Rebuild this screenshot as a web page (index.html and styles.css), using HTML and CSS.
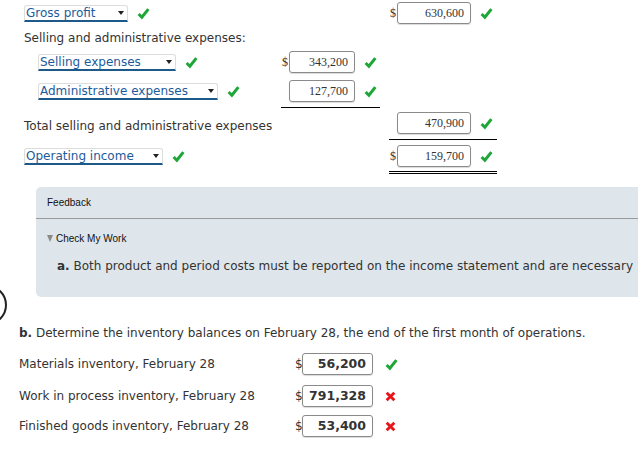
FILE: index.html
```html
<!DOCTYPE html>
<html lang="en">
<head>
    <meta charset="UTF-8">
    <title>Income statement</title>
    <link rel="stylesheet" href="styles.css">
</head>
<body>
    <div class="statement">
        <div class="row">
            <div class="label-cell">
                <span class="pick w-gross">Gross profit<i class="caret"></i></span>
                <svg class="ok" viewBox="0 0 12 12"><path d="M1.5 6.5 L4.5 9.5 L10.5 2"/></svg>
            </div>
            <div class="col1"></div>
            <div class="col2 amt">
                <span class="dollar">$</span><span class="num">630,600</span>
                <svg class="ok" viewBox="0 0 12 12"><path d="M1.5 6.5 L4.5 9.5 L10.5 2"/></svg>
            </div>
        </div>

        <div class="heading">Selling and administrative expenses:</div>

        <div class="row r-selling">
            <div class="label-cell sub">
                <span class="pick w-selling">Selling expenses<i class="caret"></i></span>
                <svg class="ok" viewBox="0 0 12 12"><path d="M1.5 6.5 L4.5 9.5 L10.5 2"/></svg>
            </div>
            <div class="col1 amt">
                <span class="dollar">$</span><span class="num">343,200</span>
                <svg class="ok" viewBox="0 0 12 12"><path d="M1.5 6.5 L4.5 9.5 L10.5 2"/></svg>
            </div>
        </div>

        <div class="row r-admin">
            <div class="label-cell sub">
                <span class="pick w-admin">Administrative expenses<i class="caret"></i></span>
                <svg class="ok" viewBox="0 0 12 12"><path d="M1.5 6.5 L4.5 9.5 L10.5 2"/></svg>
            </div>
            <div class="col1 amt single">
                <span class="dollar"></span><span class="num">127,700</span>
                <svg class="ok" viewBox="0 0 12 12"><path d="M1.5 6.5 L4.5 9.5 L10.5 2"/></svg>
            </div>
        </div>

        <div class="row r-total">
            <div class="label-cell text-label">Total selling and administrative expenses</div>
            <div class="col1"></div>
            <div class="col2 amt single">
                <span class="dollar"></span><span class="num">470,900</span>
                <svg class="ok" viewBox="0 0 12 12"><path d="M1.5 6.5 L4.5 9.5 L10.5 2"/></svg>
            </div>
        </div>

        <div class="row r-operating">
            <div class="label-cell">
                <span class="pick w-operating">Operating income<i class="caret"></i></span>
                <svg class="ok" viewBox="0 0 12 12"><path d="M1.5 6.5 L4.5 9.5 L10.5 2"/></svg>
            </div>
            <div class="col1"></div>
            <div class="col2 amt double">
                <span class="dollar">$</span><span class="num">159,700</span>
                <svg class="ok" viewBox="0 0 12 12"><path d="M1.5 6.5 L4.5 9.5 L10.5 2"/></svg>
            </div>
        </div>
    </div>

    <div class="feedback">
        <div class="feedback-title">Feedback</div>
        <div class="check-work"><i class="tri"></i>Check My Work</div>
        <p class="feedback-text"><b>a.</b> Both product and period costs must be reported on the income statement and are necessary</p>
    </div>

    <div class="part-b">
        <div class="step-circle"></div>
        <div class="part-heading"><b>b.</b> Determine the inventory balances on February 28, the end of the first month of operations.</div>

        <div class="inv-row inv-first">
            <div class="inv-label">Materials inventory, February 28</div>
            <span class="dollar">$</span><span class="inv-num">56,200</span>
            <svg class="ok" viewBox="0 0 12 12"><path d="M1.5 6.5 L4.5 9.5 L10.5 2"/></svg>
        </div>
        <div class="inv-row inv-second">
            <div class="inv-label">Work in process inventory, February 28</div>
            <span class="dollar">$</span><span class="inv-num">791,328</span>
            <svg class="bad" viewBox="0 0 10 10"><path d="M1.5 1.5 L8.5 8.5 M8.5 1.5 L1.5 8.5"/></svg>
        </div>
        <div class="inv-row inv-third">
            <div class="inv-label">Finished goods inventory, February 28</div>
            <span class="dollar">$</span><span class="inv-num">53,400</span>
            <svg class="bad" viewBox="0 0 10 10"><path d="M1.5 1.5 L8.5 8.5 M8.5 1.5 L1.5 8.5"/></svg>
        </div>
    </div>
</body>
</html>
```

FILE: styles.css
```css
* {
    margin: 0;
    padding: 0;
    box-sizing: border-box;
}

body {
    font-family: "DejaVu Sans", Verdana, sans-serif;
    font-size: 12px;
    color: #333;
    background: white;
    overflow: hidden;
}

/* income statement */

.statement {
    padding: 1px 0 0 24px;
}

.row {
    display: flex;
    align-items: flex-start;
}

.label-cell {
    width: 257px;
    height: 24px;
    display: flex;
    align-items: center;
    white-space: nowrap;
}

.label-cell.sub {
    padding-left: 14px;
}

.text-label {
    padding-top: 6px;
}

.col1,
.col2 {
    width: 108px;
}

.amt {
    display: flex;
    align-items: center;
    height: 24px;
    box-sizing: content-box;
}

.col1.amt {
    width: 99px;
    margin-right: 9px;
}

.amt.single {
    padding-bottom: 4px;
    border-bottom: 1px solid #000;
}

.amt.double {
    padding-bottom: 3px;
    border-bottom: 3px double #000;
}

.dollar {
    display: inline-block;
    width: 7px;
    margin-left: 1px;
    font-family: "Liberation Serif", serif;
    font-size: 12px;
    color: #333;
}

.num {
    width: 74px;
    height: 22px;
    line-height: 20px;
    border: 1px solid #8a8a8a;
    border-radius: 3px;
    box-shadow: 0 1px 1px rgba(0, 0, 0, 0.15);
    text-align: right;
    padding-right: 6px;
    font-family: "Liberation Serif", serif;
    font-size: 12px;
    color: #333;
}

.col1 .num {
    width: 66px;
}

.ok {
    width: 13px;
    height: 13px;
    margin-left: 9px;
    fill: none;
    stroke: #1fa638;
    stroke-width: 2.8;
}

.label-cell .ok {
    margin-left: 9px;
}

.heading {
    margin-top: 3px;
    height: 20px;
    line-height: 20px;
}

.r-selling {
    margin-top: 2px;
}

.r-admin {
    margin-top: 5px;
}

.r-total {
    margin-top: 3px;
}

.r-operating {
    margin-top: 4px;
}

/* dropdown look */

.pick {
    position: relative;
    display: inline-block;
    height: 17px;
    line-height: 14px;
    padding-left: 1px;
    color: #1c5b9b;
    border: 1px solid #ddd;
    border-bottom: 2px solid #1d5a8a;
    border-radius: 3px 3px 0 0;
}

.w-gross { width: 104px; }
.w-selling { width: 138px; }
.w-admin { width: 180px; }
.w-operating { width: 139px; }

.caret {
    position: absolute;
    right: 3px;
    top: 5px;
    border-left: 3.5px solid transparent;
    border-right: 3.5px solid transparent;
    border-top: 4px solid #222;
}

/* feedback panel */

.feedback {
    margin: 13px 0 0 36px;
    height: 110px;
    background: #dfe6eb;
    border-radius: 5px 0 0 5px;
    font-family: "Liberation Sans", Arial, sans-serif;
    font-size: 10px;
    color: #111;
}

.feedback-title {
    padding: 10px 0 0 11px;
    height: 32px;
    border-bottom: 1px solid #9a9a9a;
}

.check-work {
    padding: 14px 0 0 11px;
    display: flex;
    align-items: center;
}

.tri {
    display: inline-block;
    margin-right: 3px;
    border-left: 3px solid transparent;
    border-right: 3px solid transparent;
    border-top: 7px solid #8a8a8a;
}

.feedback-text {
    margin: 15px 0 0 21px;
    white-space: nowrap;
    font-family: "DejaVu Sans", Verdana, sans-serif;
    font-size: 12px;
    color: #333;
}

/* part b */

.part-b {
    padding-left: 19px;
}

.step-circle {
    width: 40px;
    height: 40px;
    margin: -12px 0 0 -52px;
    border: 2px solid #222;
    border-radius: 50%;
}

.part-heading {
    margin-top: 0;
    height: 16px;
    line-height: 16px;
    white-space: nowrap;
}

.inv-row {
    display: flex;
    align-items: center;
    height: 24px;
}

.inv-first { margin-top: 11px; }
.inv-second { margin-top: 8px; }
.inv-third { margin-top: 6px; }

.inv-label {
    width: 276px;
}

.inv-row .dollar {
    width: 7px;
    margin-left: 0;
    font-family: "DejaVu Sans", Verdana, sans-serif;
    font-size: 12px;
}

.inv-num {
    width: 71px;
    height: 22px;
    line-height: 20px;
    border: 1px solid #8a8a8a;
    border-radius: 3px;
    box-shadow: 0 1px 1px rgba(0, 0, 0, 0.15);
    text-align: right;
    padding-right: 6px;
    font-weight: bold;
    font-size: 12.5px;
}

.inv-row .ok {
    margin-left: 12px;
}

.bad {
    width: 11px;
    height: 11px;
    margin-left: 12px;
    fill: none;
    stroke: #e8141b;
    stroke-width: 2.6;
}
```
